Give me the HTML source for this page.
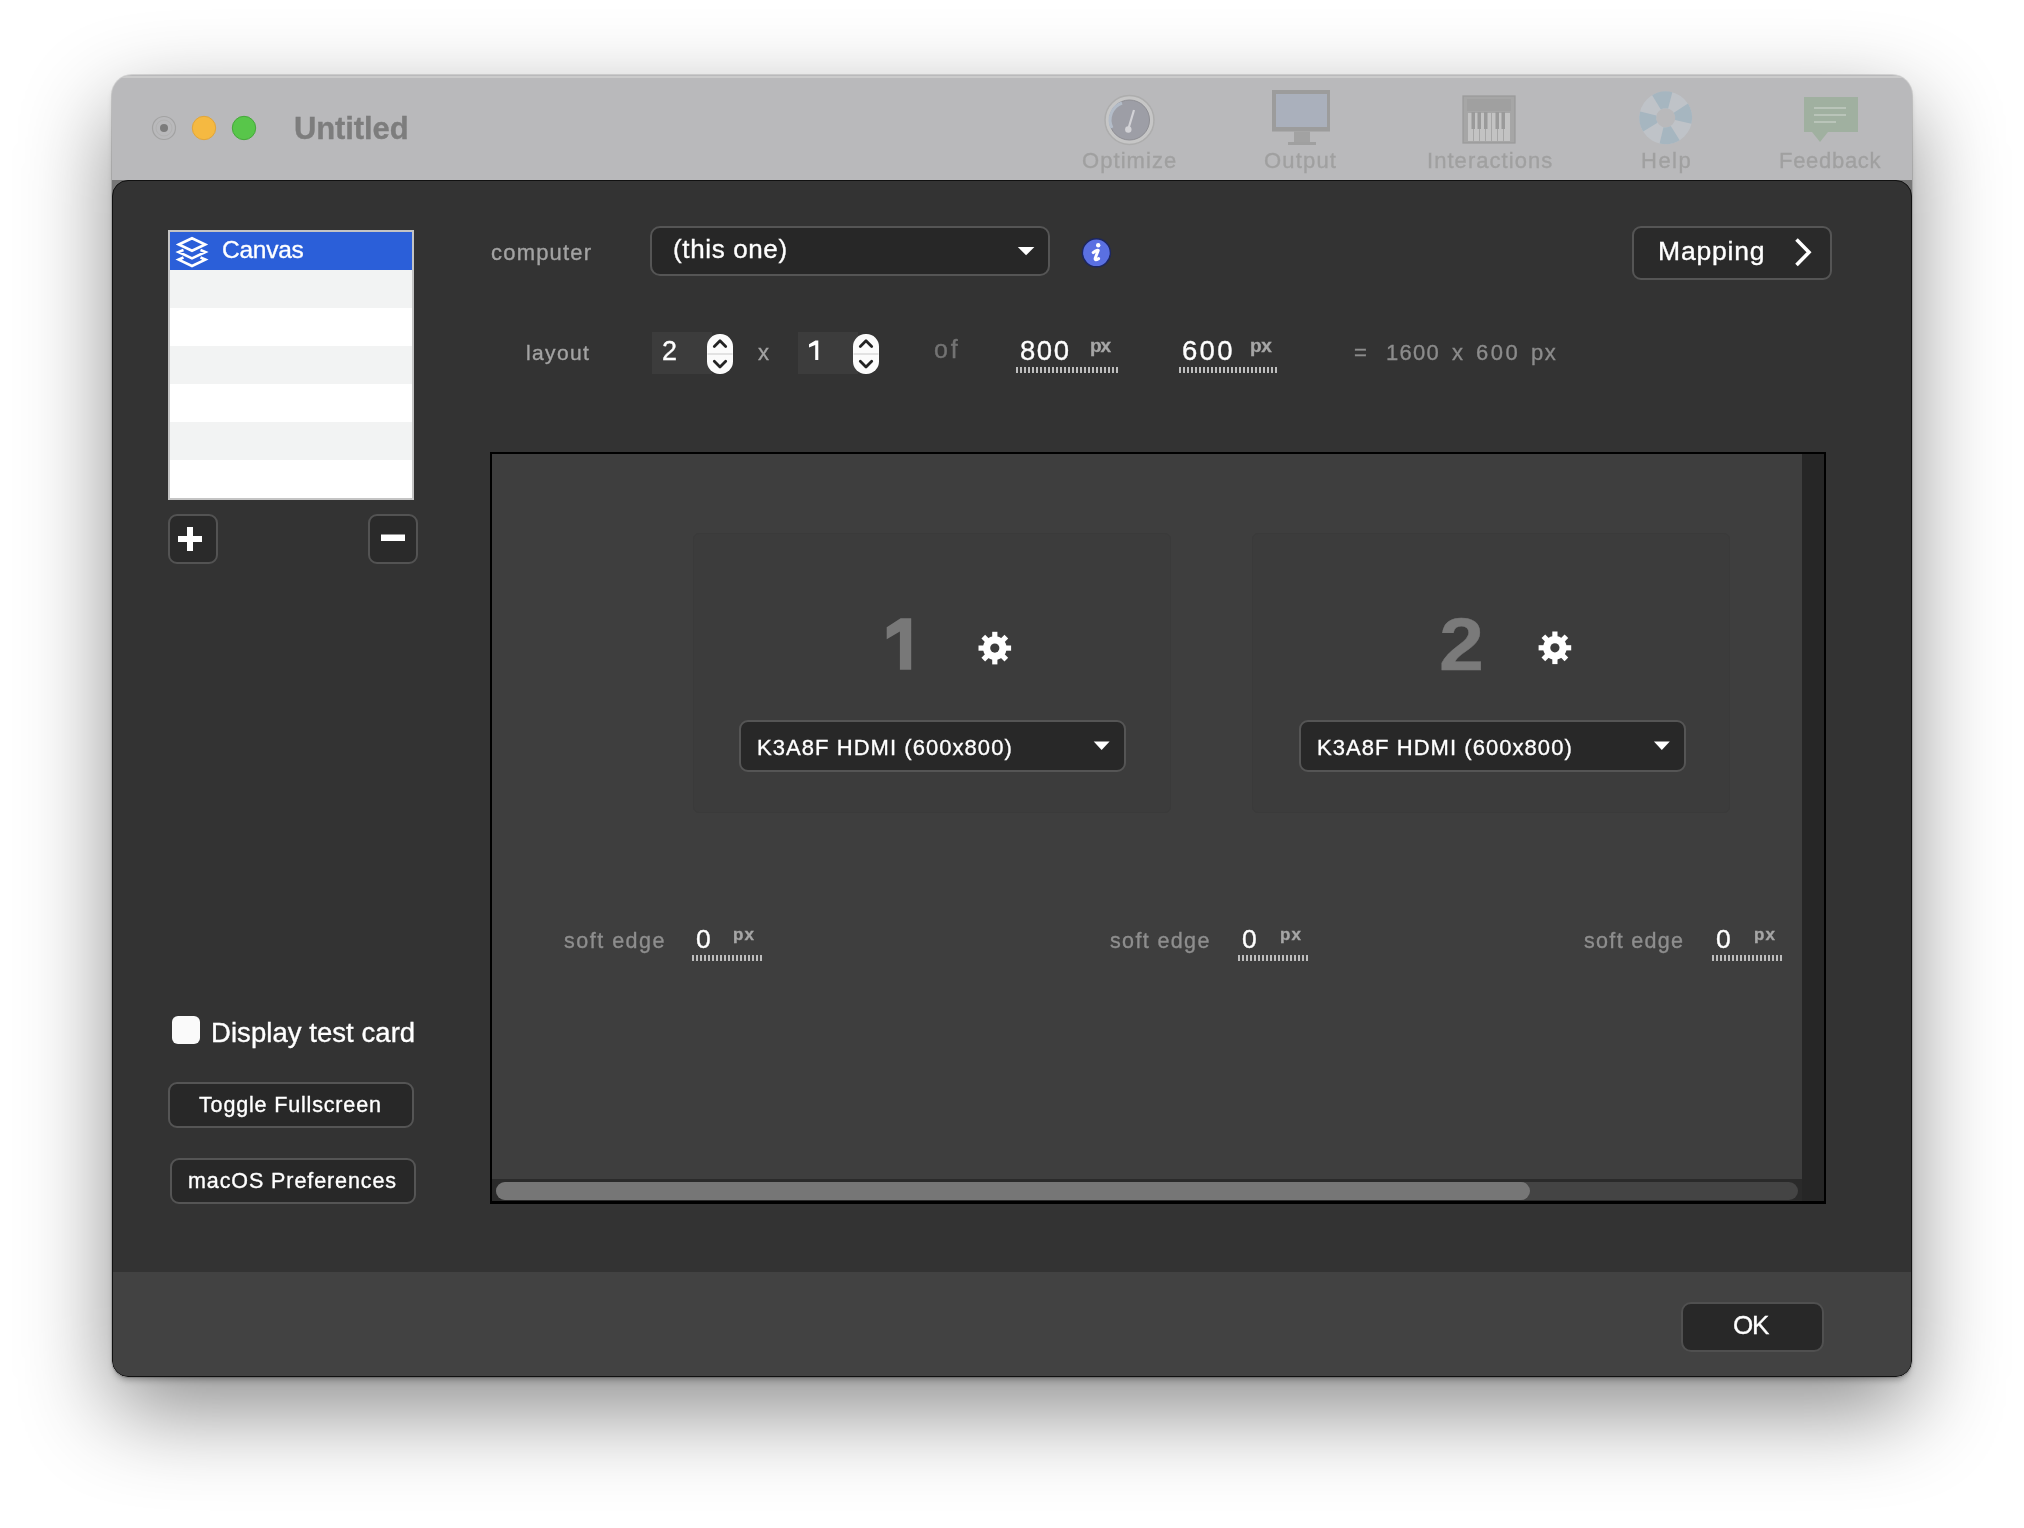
<!DOCTYPE html>
<html><head><meta charset="utf-8">
<style>
*{box-sizing:border-box;margin:0;padding:0}
html,body{width:2024px;height:1528px;overflow:hidden;background:#ffffff;font-family:"Liberation Sans",sans-serif}
#win{position:absolute;left:112px;top:75px;width:1800px;height:1302px;border-radius:20px 20px 16px 16px;background:#b9b9bb;
  box-shadow:0 34px 90px rgba(0,0,0,0.45),0 5px 7px -3px rgba(0,0,0,0.35),0 0 0 1px rgba(0,0,0,0.12);overflow:hidden}
#cornerfill{position:absolute;left:0;top:105px;width:1800px;height:30px;background:#777}
#sheet{position:absolute;left:0;top:105px;width:1800px;height:1197px;background:#333333;border-radius:16px 16px 16px 16px;border:1px solid #111;overflow:hidden}
#footer{position:absolute;left:0;top:1091px;width:1798px;height:105px;background:#424242}
#ui{position:absolute;left:0;top:0;width:2024px;height:1528px}
.a{position:absolute}
.t{position:absolute;white-space:nowrap;line-height:1;-webkit-text-stroke:0.35px currentColor;will-change:transform}
.btn{position:absolute;background:#282828;border:2px solid #555;border-radius:9px}
.dots{position:absolute;height:6px;background:repeating-linear-gradient(90deg,#bdbdbd 0 2px,transparent 2px 4px)}
svg{position:absolute;left:0;top:0;overflow:visible}
</style></head>
<body>
<div id="win">
  <div id="cornerfill"></div>
  <div style="position:absolute;left:0;top:1px;width:1800px;height:1.5px;background:#cbcbcb;border-radius:20px 20px 0 0"></div>
  <div id="sheet"><div id="footer"></div></div>
</div>
<div id="ui">
<svg width="2024" height="1528" viewBox="0 0 2024 1528">
  <!-- traffic lights -->
  <circle cx="164" cy="128" r="11.5" fill="none" stroke="#a2a2a2" stroke-width="1.2"/>
  <circle cx="164" cy="128" r="8" fill="none" stroke="#b2b2b2" stroke-width="1"/>
  <circle cx="164" cy="128" r="4" fill="#7c7c7c"/>
  <circle cx="204" cy="128" r="11.7" fill="#f5b941" stroke="#e0a53a" stroke-width="1"/>
  <circle cx="244" cy="128" r="11.7" fill="#58c64a" stroke="#45a83a" stroke-width="1"/>

  <!-- toolbar: optimize gauge -->
  <circle cx="1129.5" cy="120" r="24.5" fill="#c6c6c6" stroke="#adadad" stroke-width="1.5"/>
  <circle cx="1129.5" cy="120" r="20" fill="#9d9ea6" stroke="#8e8e94" stroke-width="1"/>
  <path d="M1112,128 A18,18 0 0 1 1122,103" fill="none" stroke="#b3bcc8" stroke-width="3"/>
  <line x1="1128.3" y1="129" x2="1134" y2="110" stroke="#d2d2d6" stroke-width="2.2"/>
  <circle cx="1128.3" cy="129.5" r="3.2" fill="#d2d2d6"/>

  <!-- output monitor -->
  <rect x="1272" y="90" width="58" height="41.5" fill="#9c9c9c"/>
  <rect x="1276" y="94" width="51" height="33" fill="#aab0bc"/>
  <rect x="1294" y="131.5" width="16" height="10.5" fill="#a2a2a2"/>
  <rect x="1288" y="142" width="28" height="3" fill="#a0a0a0"/>

  <!-- interactions keyboard -->
  <rect x="1463" y="96" width="52" height="47" fill="#a6a6a6" stroke="#9a9a9a" stroke-width="1.2"/>
  <rect x="1467" y="99" width="44" height="12" fill="#a0a0a0"/>
  <g fill="#c3c3c3">
    <rect x="1468" y="113" width="5" height="28"/><rect x="1474" y="113" width="5" height="28"/>
    <rect x="1480" y="113" width="5" height="28"/><rect x="1486" y="113" width="5" height="28"/>
    <rect x="1492" y="113" width="5" height="28"/><rect x="1498" y="113" width="5" height="28"/>
    <rect x="1504" y="113" width="6" height="28"/>
  </g>
  <g fill="#9a9a9a">
    <rect x="1471.5" y="112" width="3.5" height="17"/><rect x="1477.5" y="112" width="3.5" height="17"/>
    <rect x="1484" y="112" width="3.5" height="17"/><rect x="1495.5" y="112" width="3.5" height="17"/>
    <rect x="1501.5" y="112" width="3.5" height="17"/>
  </g>

  <!-- help lifesaver -->
  <circle cx="1665.7" cy="117.8" r="18" fill="none" stroke="#bfc3c8" stroke-width="16.8"/>
  <circle cx="1665.7" cy="117.8" r="18" fill="none" stroke="#a6b6c0" stroke-width="16.8" stroke-dasharray="14.137 14.137" transform="rotate(-32.5 1665.7 117.8)"/>
  <!-- feedback bubble -->
  <rect x="1804" y="97" width="54" height="35" fill="#a0b0a0"/>
  <path d="M1812,132 L1820,142 L1828,132 Z" fill="#a0b0a0"/>
  <g stroke="#b9c4b9" stroke-width="2">
    <line x1="1814" y1="108" x2="1846" y2="108"/>
    <line x1="1814" y1="115" x2="1846" y2="115"/>
    <line x1="1814" y1="122" x2="1836" y2="122"/>
  </g>
</svg>

  <!-- list box -->
  <div class="a" style="left:168px;top:230px;width:246px;height:270px;background:#fff;border:2px solid #c4c4c4"></div>
  <div class="a" style="left:170px;top:232px;width:242px;height:37.5px;background:#2b5fd9"></div>
  <div class="a" style="left:170px;top:269.5px;width:242px;height:38px;background:#f2f3f3"></div>
  <div class="a" style="left:170px;top:345.5px;width:242px;height:38px;background:#f2f3f3"></div>
  <div class="a" style="left:170px;top:421.5px;width:242px;height:38px;background:#f2f3f3"></div>

  <!-- +/- -->
  <div class="btn" style="left:168px;top:514px;width:50px;height:50px;border-radius:9px;background:#2a2a2a;border-color:#535353"></div>
  <div class="btn" style="left:368px;top:514px;width:50px;height:50px;border-radius:9px;background:#2a2a2a;border-color:#535353"></div>

  <!-- computer row -->
  <div class="btn" style="left:650px;top:226px;width:400px;height:50px;border-radius:10px;background:#272727;border-color:#555"></div>
  <div class="btn" style="left:1632px;top:226px;width:200px;height:54px;border-radius:9px;background:#2a2a2a;border-color:#555"></div>

  <!-- layout row -->
  <div class="a" style="left:652px;top:332px;width:60px;height:42px;background:#3c3c3c"></div>
  <div class="a" style="left:707px;top:334px;width:26px;height:40px;border-radius:12.5px;background:#fbfbfb"></div>
  <div class="a" style="left:798px;top:332px;width:60px;height:42px;background:#3c3c3c"></div>
  <div class="a" style="left:853px;top:334px;width:26px;height:40px;border-radius:12.5px;background:#fbfbfb"></div>
  <div class="dots" style="left:1016px;top:367px;width:103px"></div>
  <div class="dots" style="left:1179px;top:367px;width:99px"></div>

  <!-- canvas scroll view -->
  <div class="a" style="left:490px;top:452px;width:1336px;height:752px;background:#000"></div>
  <div class="a" style="left:492px;top:454px;width:1310px;height:725px;background:#3e3e3e"></div>
  <div class="a" style="left:1802px;top:454px;width:22px;height:747px;background:#262626"></div>
  <div class="a" style="left:492px;top:1179px;width:1310px;height:22px;background:#2a2a2a"></div>
  <div class="a" style="left:496px;top:1182px;width:1302px;height:18px;border-radius:9px;background:#444"></div>
  <div class="a" style="left:496px;top:1182px;width:1034px;height:18px;border-radius:9px;background:#767676"></div>

  <!-- cards -->
  <div class="a" style="left:693px;top:533px;width:478px;height:280px;border-radius:6px;background:#3c3c3c;border:1.5px solid #3a3a3a"></div>
  <div class="a" style="left:1252px;top:533px;width:478px;height:280px;border-radius:6px;background:#3c3c3c;border:1.5px solid #3a3a3a"></div>
  <div class="btn" style="left:738.5px;top:720px;width:387.5px;height:51.5px;border-radius:9px;background:#282828;border-color:#555"></div>
  <div class="btn" style="left:1298.5px;top:720px;width:387.5px;height:51.5px;border-radius:9px;background:#282828;border-color:#555"></div>

  <!-- soft edge dots -->
  <div class="dots" style="left:691.5px;top:955px;width:71px"></div>
  <div class="dots" style="left:1237.5px;top:955px;width:71px"></div>
  <div class="dots" style="left:1711.5px;top:955px;width:71px"></div>

  <!-- left bottom controls -->
  <div class="a" style="left:172px;top:1016px;width:28px;height:28px;border-radius:6px;background:#fafafa"></div>
  <div class="btn" style="left:168px;top:1082px;width:246px;height:46px;border-radius:9px;background:#282828"></div>
  <div class="btn" style="left:170px;top:1158px;width:246px;height:46px;border-radius:9px;background:#282828"></div>

  <!-- OK -->
  <div class="btn" style="left:1681px;top:1302px;width:143px;height:50px;border-radius:10px;background:#282828;border-color:#505050"></div>

<svg width="2024" height="1528" viewBox="0 0 2024 1528">
  <!-- layers icon -->
  <g fill="none" stroke="#fff" stroke-width="2.6" stroke-linejoin="miter">
    <path d="M178.8,244.5 L192,238.3 L205.2,244.5 L192,250.7 Z"/>
    <path d="M183.5,250 L178.6,252 L192,258.4 L205.4,252 L200.5,250"/>
    <path d="M183.5,257.5 L178.6,259.6 L192,266 L205.4,259.6 L200.5,257.5"/>
  </g>
  <!-- plus / minus -->
  <rect x="178" y="536" width="24" height="6" fill="#fff"/>
  <rect x="187" y="527" width="6" height="24" fill="#fff"/>
  <rect x="381" y="534.5" width="24" height="6.5" fill="#fff"/>
  <!-- computer dropdown arrow -->
  <path d="M1017.8,247 L1034.4,247 L1026.1,255.2 Z" fill="#fff"/>
  <!-- info icon -->
  <circle cx="1096.4" cy="252.8" r="14" fill="#5a70e2" stroke="#1c2660" stroke-width="1.4"/>
  <circle cx="1098.2" cy="245.3" r="2.2" fill="#fff"/>
  <path d="M1093.2,252.6 Q1096.5,249.6 1098.2,250.4 L1095.2,258.2 Q1094.6,261 1098.6,258.6" fill="none" stroke="#fff" stroke-width="3" stroke-linecap="round" stroke-linejoin="round"/>
  <!-- mapping chevron -->
  <path d="M1796.5,239.5 L1809,252.3 L1796.5,265" fill="none" stroke="#fff" stroke-width="3.6"/>
  <!-- steppers -->
  <g fill="none" stroke="#222" stroke-width="2.8" stroke-linecap="round" stroke-linejoin="round">
    <path d="M714.3,346.5 L720,340.8 L725.7,346.5"/>
    <path d="M714.3,361.3 L720,367 L725.7,361.3"/>
    <path d="M860.3,346.5 L866,340.8 L871.7,346.5"/>
    <path d="M860.3,361.3 L866,367 L871.7,361.3"/>
  </g>
  <line x1="707.5" y1="354" x2="732.5" y2="354" stroke="#d2d2d2" stroke-width="1.2"/>
  <line x1="853.5" y1="354" x2="878.5" y2="354" stroke="#d2d2d2" stroke-width="1.2"/>
  <!-- card dropdown arrows -->
  <path d="M1093.7,741.5 L1109.6,741.5 L1101.65,750 Z" fill="#fff"/>
  <path d="M1653.9,741.5 L1669.8,741.5 L1661.85,750 Z" fill="#fff"/>
  <!-- stepper 1 -->
  <path d="M809,344.2 L815.4,340.4 L818.3,340.4 L818.3,360 L815.2,360 L815.2,345 L809,347.6 Z" fill="#fff"/>
  <!-- big 1 -->
  <path d="M886.7,627.3 L900.6,618.3 L911.2,618.3 L911.2,669.8 L899.9,669.8 L899.9,631.6 L886.7,639.3 Z" fill="#787878"/>
  <!-- gears -->
  <g id="gear1" transform="translate(994.8,648.1)">
    <g fill="#fff">
      <rect x="-2.6" y="-16.3" width="5.2" height="32.6"/>
      <rect x="-2.6" y="-16.3" width="5.2" height="32.6" transform="rotate(45)"/>
      <rect x="-2.6" y="-16.3" width="5.2" height="32.6" transform="rotate(90)"/>
      <rect x="-2.6" y="-16.3" width="5.2" height="32.6" transform="rotate(135)"/>
      <circle r="11.8"/>
    </g>
    <circle r="4.6" fill="#3c3c3c"/>
  </g>
  <g transform="translate(1554.9,647.8)">
    <g fill="#fff">
      <rect x="-2.6" y="-16.3" width="5.2" height="32.6"/>
      <rect x="-2.6" y="-16.3" width="5.2" height="32.6" transform="rotate(45)"/>
      <rect x="-2.6" y="-16.3" width="5.2" height="32.6" transform="rotate(90)"/>
      <rect x="-2.6" y="-16.3" width="5.2" height="32.6" transform="rotate(135)"/>
      <circle r="11.8"/>
    </g>
    <circle r="4.6" fill="#3c3c3c"/>
  </g>
</svg>
<div class="t" style="left:294.14px;top:113px;font-size:31px;font-weight:bold;letter-spacing:-0.110px;color:#7d7d7d;">Untitled</div>
<div class="t" style="left:1081.66px;top:150px;font-size:22px;letter-spacing:1.060px;color:#a0a0a0;">Optimize</div>
<div class="t" style="left:1264.46px;top:150px;font-size:22px;letter-spacing:1.172px;color:#a0a0a0;">Output</div>
<div class="t" style="left:1426.57px;top:150px;font-size:22px;letter-spacing:1.045px;color:#a0a0a0;">Interactions</div>
<div class="t" style="left:1640.80px;top:150px;font-size:22px;letter-spacing:1.494px;color:#a0a0a0;">Help</div>
<div class="t" style="left:1779.40px;top:150px;font-size:22px;letter-spacing:0.708px;color:#a0a0a0;">Feedback</div>
<div class="t" style="left:221.96px;top:238px;font-size:24.5px;letter-spacing:-0.248px;color:#fff;">Canvas</div>
<div class="t" style="left:490.97px;top:242px;font-size:22px;letter-spacing:1.199px;color:#a3a3a3;">computer</div>
<div class="t" style="left:672.59px;top:236px;font-size:26px;letter-spacing:0.638px;color:#fff;">(this one)</div>
<div class="t" style="left:1658.43px;top:238px;font-size:26.5px;letter-spacing:0.805px;color:#fff;">Mapping</div>
<div class="t" style="left:526.38px;top:342px;font-size:21px;letter-spacing:1.346px;color:#a3a3a3;">layout</div>
<div class="t" style="left:662.34px;top:338px;font-size:27px;letter-spacing:0.000px;color:#fff;">2</div>
<div class="t" style="left:758.35px;top:342px;font-size:22px;letter-spacing:0.000px;color:#a3a3a3;">x</div>
<div class="t" style="left:934.25px;top:337px;font-size:25px;letter-spacing:2.964px;color:#737373;">of</div>
<div class="t" style="left:1019.50px;top:337px;font-size:27.5px;letter-spacing:1.543px;color:#fff;">800</div>
<div class="t" style="left:1089.75px;top:336px;font-size:19px;font-weight:bold;letter-spacing:-1.081px;color:#a6a6a6;">px</div>
<div class="t" style="left:1182.00px;top:337px;font-size:27.5px;letter-spacing:2.294px;color:#fff;">600</div>
<div class="t" style="left:1249.75px;top:336px;font-size:19px;font-weight:bold;letter-spacing:-0.281px;color:#a6a6a6;">px</div>
<div class="t" style="left:1353.73px;top:342px;font-size:22px;letter-spacing:0.000px;color:#8c8c8c;">=</div>
<div class="t" style="left:1385.52px;top:342px;font-size:22px;letter-spacing:1.298px;color:#8c8c8c;">1600</div>
<div class="t" style="left:1452.25px;top:342px;font-size:22px;letter-spacing:0.000px;color:#8c8c8c;">x</div>
<div class="t" style="left:1475.78px;top:342px;font-size:22px;letter-spacing:2.535px;color:#8c8c8c;">600</div>
<div class="t" style="left:1530.58px;top:342px;font-size:22px;letter-spacing:1.519px;color:#8c8c8c;">px</div>
<div class="t" style="left:1438.50px;top:607px;font-size:75px;font-weight:bold;letter-spacing:0.000px;color:#7a7a7a;transform:scaleX(1.08);transform-origin:1.5px 0">2</div>
<div class="t" style="left:756.60px;top:737px;font-size:22px;letter-spacing:1.053px;color:#fff;">K3A8F HDMI (600x800)</div>
<div class="t" style="left:1316.90px;top:737px;font-size:22px;letter-spacing:1.053px;color:#fff;">K3A8F HDMI (600x800)</div>
<div class="t" style="left:563.80px;top:931px;font-size:21.5px;letter-spacing:1.500px;color:#8e8e8e;">soft edge</div>
<div class="t" style="left:696.36px;top:926px;font-size:26.5px;letter-spacing:0.000px;color:#fff;">0</div>
<div class="t" style="left:733.48px;top:926px;font-size:17px;font-weight:bold;letter-spacing:1.006px;color:#a6a6a6;">px</div>
<div class="t" style="left:1110.30px;top:931px;font-size:21.5px;letter-spacing:1.362px;color:#8e8e8e;">soft edge</div>
<div class="t" style="left:1242.26px;top:926px;font-size:26.5px;letter-spacing:0.000px;color:#fff;">0</div>
<div class="t" style="left:1279.58px;top:926px;font-size:17px;font-weight:bold;letter-spacing:1.006px;color:#a6a6a6;">px</div>
<div class="t" style="left:1584.40px;top:931px;font-size:21.5px;letter-spacing:1.325px;color:#8e8e8e;">soft edge</div>
<div class="t" style="left:1716.26px;top:926px;font-size:26.5px;letter-spacing:0.000px;color:#fff;">0</div>
<div class="t" style="left:1753.68px;top:926px;font-size:17px;font-weight:bold;letter-spacing:1.006px;color:#a6a6a6;">px</div>
<div class="t" style="left:211.14px;top:1019px;font-size:27.5px;letter-spacing:0.054px;color:#fff;">Display test card</div>
<div class="t" style="left:199.22px;top:1095px;font-size:21.5px;letter-spacing:0.837px;color:#fff;">Toggle Fullscreen</div>
<div class="t" style="left:188.17px;top:1171px;font-size:21.5px;letter-spacing:0.908px;color:#fff;">macOS Preferences</div>
<div class="t" style="left:1733.37px;top:1312px;font-size:26px;letter-spacing:-1.342px;color:#fff;">OK</div>

</div>
</body></html>
